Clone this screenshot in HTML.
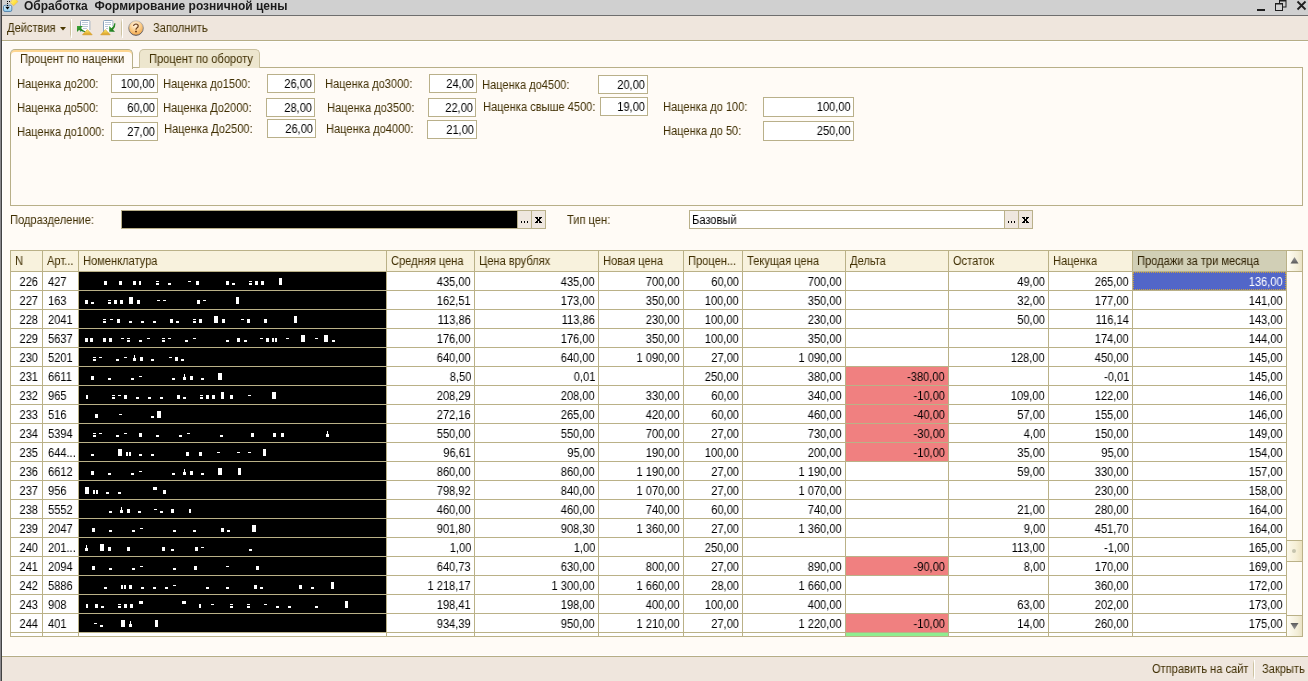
<!DOCTYPE html>
<html><head><meta charset="utf-8"><style>
html,body{margin:0;padding:0;width:1308px;height:681px;overflow:hidden;background:#fffbf6}
body{position:relative;font-family:"Liberation Sans",sans-serif;font-size:11px}
div,svg{position:absolute;box-sizing:content-box}
.t{white-space:nowrap;line-height:13px;will-change:transform}
</style></head><body>
<div style="left:0px;top:0px;width:1308px;height:15px;background:#d0d0d0;"></div>
<div style="left:0px;top:15px;width:1308px;height:1px;background:#6e6e6e;"></div>
<div style="left:0px;top:0px;width:1px;height:681px;background:#8a888c;"></div>
<div style="left:1px;top:0px;width:1px;height:681px;background:#424242;"></div>
<div class="t" style="left:24px;top:0px;color:#1a1a1a;font-size:12px;font-weight:bold;">Обработка&nbsp; Формирование розничной цены</div>
<svg style="left:0px;top:0px" width="20" height="15" viewBox="0 0 20 15">
<defs><linearGradient id="ib" x1="0" y1="0" x2="0" y2="1"><stop offset="0" stop-color="#e6f6ff"/><stop offset="1" stop-color="#8ccbee"/></linearGradient>
<linearGradient id="iy" x1="0" y1="0" x2="1" y2="1"><stop offset="0" stop-color="#fff7a0"/><stop offset="1" stop-color="#ffd200"/></linearGradient></defs>
<rect x="3.5" y="5.3" width="8.3" height="6.2" rx="1.6" fill="url(#ib)" stroke="#4f7fa8" stroke-width="0.9"/>
<rect x="7" y="1" width="1" height="1" fill="#000"/><rect x="7" y="3" width="1" height="1" fill="#000"/><rect x="7" y="5" width="1" height="1" fill="#000"/>
<rect x="9" y="1" width="1" height="1" fill="#000"/><rect x="11" y="1" width="1" height="1" fill="#444"/>
<path d="M5.2 6.8 H9.8 L7.5 9.4 Z" fill="#000"/>
<path d="M14 -2.5 L18 1.6 L13.6 5.8 L10.2 2.4 Z" fill="url(#iy)" stroke="#e6b45a" stroke-width="0.6"/>
</svg>
<svg style="left:1250px;top:0px" width="58" height="15" viewBox="0 0 58 15">
<rect x="7" y="9" width="8" height="2" fill="#1e1e1e"/>
<rect x="29.5" y="0.5" width="6.5" height="6.5" fill="none" stroke="#1e1e1e"/>
<rect x="29" y="0" width="7" height="1.5" fill="#1e1e1e"/>
<rect x="25.5" y="3.5" width="7" height="7" fill="#d3d3d3" stroke="#1e1e1e"/>
<rect x="25" y="3" width="8" height="1.5" fill="#1e1e1e"/>
<path d="M47.5 1.5 L55.5 9.5 M55.5 1.5 L47.5 9.5" stroke="#1e1e1e" stroke-width="1.8"/>
</svg>
<div style="left:2px;top:16px;width:1306px;height:24px;background:#efe6dd;"></div>
<div style="left:2px;top:40px;width:1306px;height:1px;background:#b6ad86;"></div>
<div class="t" style="left:7px;top:22px;color:#3f2e00;font-size:12px;font-weight:normal;transform:scaleX(0.925);transform-origin:left center;">Действия</div>
<svg style="left:60px;top:27px" width="6" height="4"><path d="M0 0 H6 L3 3.5 Z" fill="#4a3700"/></svg>
<div style="left:70px;top:19px;width:1px;height:19px;background:linear-gradient(#efe6dd,#cdc3a0 20%,#cdc3a0 80%,#efe6dd)"></div>
<div style="left:71px;top:19px;width:1px;height:19px;background:#ffffff;"></div>
<div style="left:121px;top:19px;width:1px;height:19px;background:linear-gradient(#efe6dd,#cdc3a0 20%,#cdc3a0 80%,#efe6dd)"></div>
<div style="left:122px;top:19px;width:1px;height:19px;background:#ffffff;"></div>
<svg style="left:74px;top:17px" width="46" height="22" viewBox="0 0 46 22">
<defs>
<linearGradient id="yg" x1="0" y1="0" x2="0" y2="1"><stop offset="0" stop-color="#fff27a"/><stop offset="1" stop-color="#d99a1a"/></linearGradient>
<linearGradient id="gg" x1="0" y1="0" x2="1" y2="1"><stop offset="0" stop-color="#3fa83a"/><stop offset="1" stop-color="#136e13"/></linearGradient>
</defs>
<path d="M6.5 15 V4.5 Q6.5 3.5 7.5 3.5 H14.8 Q15.8 3.5 15.8 4.5 V13" fill="#fff" stroke="#8aa2ba" stroke-width="1"/>
<rect x="7" y="4" width="8.3" height="11" fill="#fff"/>
<path d="M8 5.5 H14 M8 7.5 H14 M9 9.5 H14 M9 11.5 H13" stroke="#b4c2d4" stroke-width="0.9"/>
<path d="M3 9 L9 9 L7 11 Q9 14 11.5 14.5 L10.5 15 Q7 14.5 5 13 L3 15 Z" fill="url(#gg)"/>
<path d="M8.5 17.8 L13.4 12.6 L18.2 17.8 Z" fill="url(#yg)" stroke="#d49a20" stroke-width="0.6"/>
<path d="M29.5 15 V4.5 Q29.5 3.5 30.5 3.5 H37.8 Q38.8 3.5 38.8 4.5 V9" fill="#fff" stroke="#8aa2ba" stroke-width="1"/>
<rect x="30" y="4" width="8.3" height="11" fill="#fff"/>
<path d="M31 5.5 H37 M31 7.5 H37 M31 9.5 H34 M32 11.5 H34" stroke="#b4c2d4" stroke-width="0.9"/>
<path d="M35.2 9 L37.5 11.3 Q40 9 40.5 6 L41.5 6.5 Q41.5 10 39 12.8 L41 14.8 L35.2 14.8 Z" fill="url(#gg)"/>
<path d="M26.7 17.8 L31.4 12.6 L36.2 17.8 Z" fill="url(#yg)" stroke="#d49a20" stroke-width="0.6"/>
</svg>
<svg style="left:127px;top:19px" width="18" height="18" viewBox="0 0 18 18">
<defs><radialGradient id="hg" cx="0.45" cy="0.3" r="0.75"><stop offset="0" stop-color="#fff6e8"/><stop offset="0.55" stop-color="#fbc880"/><stop offset="1" stop-color="#f0a040"/></radialGradient>
<linearGradient id="hb" x1="0" y1="0" x2="0" y2="1"><stop offset="0" stop-color="#c8c4c0"/><stop offset="1" stop-color="#505058"/></linearGradient></defs>
<circle cx="9" cy="9" r="7.3" fill="url(#hg)" stroke="url(#hb)" stroke-width="1"/>
<path d="M6.6 7 Q6.8 5 9 5 Q11.2 5.1 11.2 6.9 Q11.2 8.1 9.9 8.9 Q9 9.5 9 10.7" fill="none" stroke="#6a3d1a" stroke-width="1.2"/>
<rect x="8.1" y="11.8" width="1.8" height="1.5" fill="#6a3d1a"/>
</svg>
<div class="t" style="left:153px;top:22px;color:#3f2e00;font-size:12px;font-weight:normal;transform:scaleX(0.925);transform-origin:left center;">Заполнить</div>
<div style="left:2px;top:41px;width:1306px;height:615px;background:#fffbf6;"></div>
<div style="left:2px;top:41px;width:1306px;height:1px;background:#ffffff;"></div>
<div style="left:2px;top:655px;width:1306px;height:1px;background:#ffffff;"></div>
<div style="left:2px;top:41px;width:1px;height:615px;background:#ffffff;"></div>
<div style="left:2px;top:656px;width:1306px;height:1px;background:#b6ad86;"></div>
<div style="left:2px;top:657px;width:1306px;height:24px;background:#efe6dd;"></div>
<div class="t" style="left:1152px;top:663px;color:#3f2e00;font-size:12px;font-weight:normal;transform:scaleX(0.925);transform-origin:left center;">Отправить на сайт</div>
<div style="left:1253px;top:660px;width:1px;height:19px;background:linear-gradient(#efe6dd,#cdc3a0 20%,#cdc3a0 80%,#efe6dd)"></div>
<div style="left:1254px;top:660px;width:1px;height:19px;background:#ffffff;"></div>
<div class="t" style="left:1262px;top:663px;color:#3f2e00;font-size:12px;font-weight:normal;transform:scaleX(0.925);transform-origin:left center;">Закрыть</div>
<div style="left:10px;top:67px;width:1291px;height:137px;border:1px solid #b8af88;background:#fffbf6;"></div>
<div style="left:139px;top:49px;width:119px;height:18px;border:1px solid #c9c09e;border-bottom:none;border-radius:5px 5px 0 0;background:#ede6ce"></div>
<div class="t" style="left:149px;top:53px;color:#3f2e00;font-size:12px;font-weight:normal;transform:scaleX(0.925);transform-origin:left center;">Процент по обороту</div>
<div style="left:10px;top:49px;width:121px;height:19px;border:1px solid #b8af88;border-bottom:none;border-radius:5px 5px 0 0;background:#fffbf6;box-shadow:inset 0 2px 0 #fed690"></div>
<div class="t" style="left:20px;top:53px;color:#3f2e00;font-size:12px;font-weight:normal;transform:scaleX(0.925);transform-origin:left center;">Процент по наценки</div>
<div class="t" style="left:17px;top:78px;color:#3f2e00;font-size:12px;font-weight:normal;transform:scaleX(0.925);transform-origin:left center;">Наценка до200:</div>
<div style="left:111px;top:74px;width:45px;height:17px;border:1px solid #b9b08a;background:#fff;"></div>
<div class="t" style="right:1153px;top:78px;color:#000000;font-size:12px;font-weight:normal;transform:scaleX(0.925);transform-origin:right center;">100,00</div>
<div class="t" style="left:163px;top:78px;color:#3f2e00;font-size:12px;font-weight:normal;transform:scaleX(0.925);transform-origin:left center;">Наценка до1500:</div>
<div style="left:267px;top:74px;width:46px;height:17px;border:1px solid #b9b08a;background:#fff;"></div>
<div class="t" style="right:996px;top:78px;color:#000000;font-size:12px;font-weight:normal;transform:scaleX(0.925);transform-origin:right center;">26,00</div>
<div class="t" style="left:325px;top:78px;color:#3f2e00;font-size:12px;font-weight:normal;transform:scaleX(0.925);transform-origin:left center;">Наценка до3000:</div>
<div style="left:429px;top:74px;width:46px;height:17px;border:1px solid #b9b08a;background:#fff;"></div>
<div class="t" style="right:834px;top:78px;color:#000000;font-size:12px;font-weight:normal;transform:scaleX(0.925);transform-origin:right center;">24,00</div>
<div class="t" style="left:482px;top:79px;color:#3f2e00;font-size:12px;font-weight:normal;transform:scaleX(0.925);transform-origin:left center;">Наценка до4500:</div>
<div style="left:598px;top:75px;width:48px;height:17px;border:1px solid #b9b08a;background:#fff;"></div>
<div class="t" style="right:663px;top:79px;color:#000000;font-size:12px;font-weight:normal;transform:scaleX(0.925);transform-origin:right center;">20,00</div>
<div class="t" style="left:17px;top:102px;color:#3f2e00;font-size:12px;font-weight:normal;transform:scaleX(0.925);transform-origin:left center;">Наценка до500:</div>
<div style="left:111px;top:98px;width:45px;height:17px;border:1px solid #b9b08a;background:#fff;"></div>
<div class="t" style="right:1153px;top:102px;color:#000000;font-size:12px;font-weight:normal;transform:scaleX(0.925);transform-origin:right center;">60,00</div>
<div class="t" style="left:163px;top:102px;color:#3f2e00;font-size:12px;font-weight:normal;transform:scaleX(0.925);transform-origin:left center;">Наценка До2000:</div>
<div style="left:266px;top:98px;width:47px;height:17px;border:1px solid #b9b08a;background:#fff;"></div>
<div class="t" style="right:996px;top:102px;color:#000000;font-size:12px;font-weight:normal;transform:scaleX(0.925);transform-origin:right center;">28,00</div>
<div class="t" style="left:327px;top:102px;color:#3f2e00;font-size:12px;font-weight:normal;transform:scaleX(0.925);transform-origin:left center;">Наценка до3500:</div>
<div style="left:428px;top:98px;width:46px;height:17px;border:1px solid #b9b08a;background:#fff;"></div>
<div class="t" style="right:835px;top:102px;color:#000000;font-size:12px;font-weight:normal;transform:scaleX(0.925);transform-origin:right center;">22,00</div>
<div class="t" style="left:483px;top:101px;color:#3f2e00;font-size:12px;font-weight:normal;transform:scaleX(0.925);transform-origin:left center;">Наценка свыше 4500:</div>
<div style="left:600px;top:97px;width:46px;height:17px;border:1px solid #b9b08a;background:#fff;"></div>
<div class="t" style="right:663px;top:101px;color:#000000;font-size:12px;font-weight:normal;transform:scaleX(0.925);transform-origin:right center;">19,00</div>
<div class="t" style="left:663px;top:101px;color:#3f2e00;font-size:12px;font-weight:normal;transform:scaleX(0.925);transform-origin:left center;">Наценка до 100:</div>
<div style="left:763px;top:97px;width:89px;height:18px;border:1px solid #b9b08a;background:#fff;"></div>
<div class="t" style="right:457px;top:101px;color:#000000;font-size:12px;font-weight:normal;transform:scaleX(0.925);transform-origin:right center;">100,00</div>
<div class="t" style="left:17px;top:126px;color:#3f2e00;font-size:12px;font-weight:normal;transform:scaleX(0.925);transform-origin:left center;">Наценка до1000:</div>
<div style="left:111px;top:122px;width:45px;height:17px;border:1px solid #b9b08a;background:#fff;"></div>
<div class="t" style="right:1153px;top:126px;color:#000000;font-size:12px;font-weight:normal;transform:scaleX(0.925);transform-origin:right center;">27,00</div>
<div class="t" style="left:164px;top:123px;color:#3f2e00;font-size:12px;font-weight:normal;transform:scaleX(0.925);transform-origin:left center;">Наценка До2500:</div>
<div style="left:267px;top:119px;width:47px;height:17px;border:1px solid #b9b08a;background:#fff;"></div>
<div class="t" style="right:995px;top:123px;color:#000000;font-size:12px;font-weight:normal;transform:scaleX(0.925);transform-origin:right center;">26,00</div>
<div class="t" style="left:326px;top:123px;color:#3f2e00;font-size:12px;font-weight:normal;transform:scaleX(0.925);transform-origin:left center;">Наценка до4000:</div>
<div style="left:427px;top:120px;width:48px;height:17px;border:1px solid #b9b08a;background:#fff;"></div>
<div class="t" style="right:834px;top:124px;color:#000000;font-size:12px;font-weight:normal;transform:scaleX(0.925);transform-origin:right center;">21,00</div>
<div class="t" style="left:663px;top:125px;color:#3f2e00;font-size:12px;font-weight:normal;transform:scaleX(0.925);transform-origin:left center;">Наценка до 50:</div>
<div style="left:763px;top:121px;width:89px;height:18px;border:1px solid #b9b08a;background:#fff;"></div>
<div class="t" style="right:457px;top:125px;color:#000000;font-size:12px;font-weight:normal;transform:scaleX(0.925);transform-origin:right center;">250,00</div>
<div class="t" style="left:10px;top:214px;color:#3f2e00;font-size:12px;font-weight:normal;transform:scaleX(0.925);transform-origin:left center;">Подразделение:</div>
<div style="left:121px;top:210px;width:423px;height:17px;border:1px solid #b9b08a;background:#fff;"></div>
<div style="left:517px;top:211px;width:1px;height:17px;background:#b9b08a;"></div>
<div style="left:518px;top:211px;width:13px;height:17px;background:#efe7df;"></div>
<div style="left:531px;top:211px;width:1px;height:17px;background:#b9b08a;"></div>
<div style="left:532px;top:211px;width:13px;height:17px;background:#efe7df;"></div>
<div style="left:521px;top:221px;width:1px;height:2px;background:#000;"></div>
<div style="left:524px;top:221px;width:1px;height:2px;background:#000;"></div>
<div style="left:527px;top:221px;width:1px;height:2px;background:#000;"></div>
<div style="left:535px;top:217px;width:3px;height:1px;background:#000;"></div>
<div style="left:539px;top:217px;width:3px;height:1px;background:#000;"></div>
<div style="left:536px;top:218px;width:2px;height:1px;background:#000;"></div>
<div style="left:539px;top:218px;width:2px;height:1px;background:#000;"></div>
<div style="left:537px;top:219px;width:3px;height:1px;background:#000;"></div>
<div style="left:537px;top:220px;width:3px;height:1px;background:#000;"></div>
<div style="left:536px;top:221px;width:2px;height:1px;background:#000;"></div>
<div style="left:539px;top:221px;width:2px;height:1px;background:#000;"></div>
<div style="left:535px;top:222px;width:3px;height:1px;background:#000;"></div>
<div style="left:539px;top:222px;width:3px;height:1px;background:#000;"></div>
<div style="left:122px;top:211px;width:395px;height:17px;background:#000;"></div>
<div class="t" style="left:567px;top:214px;color:#3f2e00;font-size:12px;font-weight:normal;transform:scaleX(0.925);transform-origin:left center;">Тип цен:</div>
<div style="left:689px;top:210px;width:342px;height:17px;border:1px solid #b9b08a;background:#fff;"></div>
<div style="left:1004px;top:211px;width:1px;height:17px;background:#b9b08a;"></div>
<div style="left:1005px;top:211px;width:13px;height:17px;background:#efe7df;"></div>
<div style="left:1018px;top:211px;width:1px;height:17px;background:#b9b08a;"></div>
<div style="left:1019px;top:211px;width:13px;height:17px;background:#efe7df;"></div>
<div style="left:1008px;top:221px;width:1px;height:2px;background:#000;"></div>
<div style="left:1011px;top:221px;width:1px;height:2px;background:#000;"></div>
<div style="left:1014px;top:221px;width:1px;height:2px;background:#000;"></div>
<div style="left:1022px;top:217px;width:3px;height:1px;background:#000;"></div>
<div style="left:1026px;top:217px;width:3px;height:1px;background:#000;"></div>
<div style="left:1023px;top:218px;width:2px;height:1px;background:#000;"></div>
<div style="left:1026px;top:218px;width:2px;height:1px;background:#000;"></div>
<div style="left:1024px;top:219px;width:3px;height:1px;background:#000;"></div>
<div style="left:1024px;top:220px;width:3px;height:1px;background:#000;"></div>
<div style="left:1023px;top:221px;width:2px;height:1px;background:#000;"></div>
<div style="left:1026px;top:221px;width:2px;height:1px;background:#000;"></div>
<div style="left:1022px;top:222px;width:3px;height:1px;background:#000;"></div>
<div style="left:1026px;top:222px;width:3px;height:1px;background:#000;"></div>
<div class="t" style="left:692px;top:214px;color:#000;font-size:12px;font-weight:normal;transform:scaleX(0.925);transform-origin:left center;">Базовый</div>
<div style="left:10px;top:250px;width:1293px;height:387px;background:#bab187;"></div>
<div style="left:11px;top:251px;width:1291px;height:385px;background:#ffffff;"></div>
<div style="left:11px;top:251px;width:1275px;height:20px;background:#f8f2dd;"></div>
<div style="left:1133px;top:251px;width:153px;height:20px;background:#d1cfb6;"></div>
<div style="left:11px;top:271px;width:1275px;height:1px;background:#bab187;"></div>
<div class="t" style="left:15px;top:255px;color:#3f2e00;font-size:12px;font-weight:normal;transform:scaleX(0.925);transform-origin:left center;">N</div>
<div class="t" style="left:47px;top:255px;color:#3f2e00;font-size:12px;font-weight:normal;transform:scaleX(0.925);transform-origin:left center;">Арт...</div>
<div class="t" style="left:83px;top:255px;color:#3f2e00;font-size:12px;font-weight:normal;transform:scaleX(0.925);transform-origin:left center;">Номенклатура</div>
<div class="t" style="left:391px;top:255px;color:#3f2e00;font-size:12px;font-weight:normal;transform:scaleX(0.925);transform-origin:left center;">Средняя цена</div>
<div class="t" style="left:479px;top:255px;color:#3f2e00;font-size:12px;font-weight:normal;transform:scaleX(0.925);transform-origin:left center;">Цена врублях</div>
<div class="t" style="left:603px;top:255px;color:#3f2e00;font-size:12px;font-weight:normal;transform:scaleX(0.925);transform-origin:left center;">Новая цена</div>
<div class="t" style="left:688px;top:255px;color:#3f2e00;font-size:12px;font-weight:normal;transform:scaleX(0.925);transform-origin:left center;">Процен...</div>
<div class="t" style="left:747px;top:255px;color:#3f2e00;font-size:12px;font-weight:normal;transform:scaleX(0.925);transform-origin:left center;">Текущая цена</div>
<div class="t" style="left:850px;top:255px;color:#3f2e00;font-size:12px;font-weight:normal;transform:scaleX(0.925);transform-origin:left center;">Дельта</div>
<div class="t" style="left:953px;top:255px;color:#3f2e00;font-size:12px;font-weight:normal;transform:scaleX(0.925);transform-origin:left center;">Остаток</div>
<div class="t" style="left:1053px;top:255px;color:#3f2e00;font-size:12px;font-weight:normal;transform:scaleX(0.925);transform-origin:left center;">Наценка</div>
<div class="t" style="left:1137px;top:255px;color:#2e2000;font-size:12px;font-weight:normal;transform:scaleX(0.925);transform-origin:left center;">Продажи за три месяца</div>
<div style="left:1287px;top:251px;width:15px;height:385px;background:#fffcf6;"></div>
<div style="left:1286px;top:251px;width:1px;height:385px;background:#bab187;"></div>
<div style="left:1287px;top:251px;width:15px;height:20px;background:linear-gradient(90deg,#fffdf4,#f3eed8 70%,#ebe3c6)"></div>
<div style="left:1287px;top:271px;width:15px;height:1px;background:#bab187;"></div>
<svg style="left:1290px;top:257px" width="9" height="7"><defs><linearGradient id="ag" x1="0" y1="0" x2="0" y2="1"><stop offset="0" stop-color="#9a9a9a"/><stop offset="1" stop-color="#5a5a5a"/></linearGradient></defs><path d="M4.5 0 L8.5 6.5 H0.5 Z" fill="url(#ag)"/></svg>
<div style="left:1287px;top:616px;width:15px;height:20px;background:linear-gradient(90deg,#fffdf4,#f3eed8 70%,#ebe3c6)"></div>
<div style="left:1287px;top:615px;width:15px;height:1px;background:#bab187;"></div>
<svg style="left:1290px;top:623px" width="9" height="7"><defs><linearGradient id="ag2" x1="0" y1="0" x2="0" y2="1"><stop offset="0" stop-color="#5a5a5a"/><stop offset="1" stop-color="#9a9a9a"/></linearGradient></defs><path d="M0.5 0 H8.5 L4.5 6.5 Z" fill="url(#ag2)"/></svg>
<div style="left:1287px;top:540px;width:15px;height:22px;background:linear-gradient(90deg,#fbf8ea,#f6efd6 60%,#ece2c0);border-top:1px solid #bab187;border-bottom:1px solid #bab187;box-sizing:border-box"></div>
<div style="left:1292px;top:549px;width:4px;height:4px;border-radius:2px;background:#c6c4ae"></div>
<div style="left:11px;top:290px;width:1275px;height:1px;background:#bab187;"></div>
<div style="left:79px;top:272px;width:307px;height:18px;background:#000;"></div>
<div style="left:1133px;top:272px;width:153px;height:18px;background:#5266c8;outline:1px dotted #c8a040;outline-offset:-1px"></div>
<div class="t" style="right:1270px;top:276px;color:#000;font-size:12px;font-weight:normal;transform:scaleX(0.925);transform-origin:right center;">226</div>
<div class="t" style="left:48px;top:276px;color:#000;font-size:12px;font-weight:normal;transform:scaleX(0.925);transform-origin:left center;">427</div>
<div class="t" style="right:837px;top:276px;color:#000;font-size:12px;font-weight:normal;transform:scaleX(0.925);transform-origin:right center;">435,00</div>
<div class="t" style="right:713px;top:276px;color:#000;font-size:12px;font-weight:normal;transform:scaleX(0.925);transform-origin:right center;">435,00</div>
<div class="t" style="right:628px;top:276px;color:#000;font-size:12px;font-weight:normal;transform:scaleX(0.925);transform-origin:right center;">700,00</div>
<div class="t" style="right:569px;top:276px;color:#000;font-size:12px;font-weight:normal;transform:scaleX(0.925);transform-origin:right center;">60,00</div>
<div class="t" style="right:466px;top:276px;color:#000;font-size:12px;font-weight:normal;transform:scaleX(0.925);transform-origin:right center;">700,00</div>
<div class="t" style="right:263px;top:276px;color:#000;font-size:12px;font-weight:normal;transform:scaleX(0.925);transform-origin:right center;">49,00</div>
<div class="t" style="right:179px;top:276px;color:#000;font-size:12px;font-weight:normal;transform:scaleX(0.925);transform-origin:right center;">265,00</div>
<div class="t" style="right:25px;top:276px;color:#fff;font-size:12px;font-weight:normal;transform:scaleX(0.925);transform-origin:right center;">136,00</div>
<div style="left:104px;top:281px;width:3px;height:4px;background:#fff;"></div>
<div style="left:119px;top:281px;width:3px;height:4px;background:#fff;"></div>
<div style="left:133px;top:281px;width:3px;height:4px;background:#fff;"></div>
<div style="left:139px;top:281px;width:2px;height:4px;background:#fff;"></div>
<div style="left:156px;top:281px;width:3px;height:1px;background:#fff;"></div>
<div style="left:156px;top:283px;width:3px;height:2px;background:#fff;"></div>
<div style="left:168px;top:283px;width:3px;height:2px;background:#fff;"></div>
<div style="left:188px;top:281px;width:3px;height:1px;background:#fff;"></div>
<div style="left:196px;top:281px;width:3px;height:4px;background:#fff;"></div>
<div style="left:226px;top:281px;width:3px;height:4px;background:#fff;"></div>
<div style="left:232px;top:283px;width:3px;height:2px;background:#fff;"></div>
<div style="left:249px;top:281px;width:3px;height:1px;background:#fff;"></div>
<div style="left:249px;top:283px;width:3px;height:2px;background:#fff;"></div>
<div style="left:255px;top:281px;width:3px;height:4px;background:#fff;"></div>
<div style="left:261px;top:281px;width:3px;height:4px;background:#fff;"></div>
<div style="left:279px;top:278px;width:3px;height:7px;background:#fff;"></div>
<div style="left:11px;top:309px;width:1275px;height:1px;background:#bab187;"></div>
<div style="left:79px;top:291px;width:307px;height:18px;background:#000;"></div>
<div class="t" style="right:1270px;top:295px;color:#000;font-size:12px;font-weight:normal;transform:scaleX(0.925);transform-origin:right center;">227</div>
<div class="t" style="left:48px;top:295px;color:#000;font-size:12px;font-weight:normal;transform:scaleX(0.925);transform-origin:left center;">163</div>
<div class="t" style="right:837px;top:295px;color:#000;font-size:12px;font-weight:normal;transform:scaleX(0.925);transform-origin:right center;">162,51</div>
<div class="t" style="right:713px;top:295px;color:#000;font-size:12px;font-weight:normal;transform:scaleX(0.925);transform-origin:right center;">173,00</div>
<div class="t" style="right:628px;top:295px;color:#000;font-size:12px;font-weight:normal;transform:scaleX(0.925);transform-origin:right center;">350,00</div>
<div class="t" style="right:569px;top:295px;color:#000;font-size:12px;font-weight:normal;transform:scaleX(0.925);transform-origin:right center;">100,00</div>
<div class="t" style="right:466px;top:295px;color:#000;font-size:12px;font-weight:normal;transform:scaleX(0.925);transform-origin:right center;">350,00</div>
<div class="t" style="right:263px;top:295px;color:#000;font-size:12px;font-weight:normal;transform:scaleX(0.925);transform-origin:right center;">32,00</div>
<div class="t" style="right:179px;top:295px;color:#000;font-size:12px;font-weight:normal;transform:scaleX(0.925);transform-origin:right center;">177,00</div>
<div class="t" style="right:25px;top:295px;color:#000;font-size:12px;font-weight:normal;transform:scaleX(0.925);transform-origin:right center;">141,00</div>
<div style="left:85px;top:300px;width:3px;height:4px;background:#fff;"></div>
<div style="left:91px;top:302px;width:3px;height:2px;background:#fff;"></div>
<div style="left:108px;top:300px;width:3px;height:1px;background:#fff;"></div>
<div style="left:108px;top:302px;width:3px;height:2px;background:#fff;"></div>
<div style="left:114px;top:300px;width:3px;height:4px;background:#fff;"></div>
<div style="left:120px;top:300px;width:3px;height:4px;background:#fff;"></div>
<div style="left:129px;top:297px;width:4px;height:7px;background:#fff;"></div>
<div style="left:137px;top:300px;width:3px;height:4px;background:#fff;"></div>
<div style="left:157px;top:300px;width:3px;height:1px;background:#fff;"></div>
<div style="left:163px;top:300px;width:3px;height:1px;background:#fff;"></div>
<div style="left:197px;top:300px;width:3px;height:4px;background:#fff;"></div>
<div style="left:203px;top:300px;width:3px;height:1px;background:#fff;"></div>
<div style="left:236px;top:297px;width:3px;height:7px;background:#fff;"></div>
<div style="left:11px;top:328px;width:1275px;height:1px;background:#bab187;"></div>
<div style="left:79px;top:310px;width:307px;height:18px;background:#000;"></div>
<div class="t" style="right:1270px;top:314px;color:#000;font-size:12px;font-weight:normal;transform:scaleX(0.925);transform-origin:right center;">228</div>
<div class="t" style="left:48px;top:314px;color:#000;font-size:12px;font-weight:normal;transform:scaleX(0.925);transform-origin:left center;">2041</div>
<div class="t" style="right:837px;top:314px;color:#000;font-size:12px;font-weight:normal;transform:scaleX(0.925);transform-origin:right center;">113,86</div>
<div class="t" style="right:713px;top:314px;color:#000;font-size:12px;font-weight:normal;transform:scaleX(0.925);transform-origin:right center;">113,86</div>
<div class="t" style="right:628px;top:314px;color:#000;font-size:12px;font-weight:normal;transform:scaleX(0.925);transform-origin:right center;">230,00</div>
<div class="t" style="right:569px;top:314px;color:#000;font-size:12px;font-weight:normal;transform:scaleX(0.925);transform-origin:right center;">100,00</div>
<div class="t" style="right:466px;top:314px;color:#000;font-size:12px;font-weight:normal;transform:scaleX(0.925);transform-origin:right center;">230,00</div>
<div class="t" style="right:263px;top:314px;color:#000;font-size:12px;font-weight:normal;transform:scaleX(0.925);transform-origin:right center;">50,00</div>
<div class="t" style="right:179px;top:314px;color:#000;font-size:12px;font-weight:normal;transform:scaleX(0.925);transform-origin:right center;">116,14</div>
<div class="t" style="right:25px;top:314px;color:#000;font-size:12px;font-weight:normal;transform:scaleX(0.925);transform-origin:right center;">143,00</div>
<div style="left:103px;top:319px;width:3px;height:1px;background:#fff;"></div>
<div style="left:103px;top:321px;width:3px;height:2px;background:#fff;"></div>
<div style="left:110px;top:319px;width:3px;height:1px;background:#fff;"></div>
<div style="left:117px;top:319px;width:3px;height:4px;background:#fff;"></div>
<div style="left:129px;top:321px;width:3px;height:2px;background:#fff;"></div>
<div style="left:141px;top:321px;width:3px;height:2px;background:#fff;"></div>
<div style="left:153px;top:321px;width:3px;height:2px;background:#fff;"></div>
<div style="left:170px;top:319px;width:3px;height:4px;background:#fff;"></div>
<div style="left:176px;top:321px;width:3px;height:2px;background:#fff;"></div>
<div style="left:193px;top:319px;width:3px;height:1px;background:#fff;"></div>
<div style="left:193px;top:321px;width:3px;height:2px;background:#fff;"></div>
<div style="left:199px;top:319px;width:3px;height:4px;background:#fff;"></div>
<div style="left:214px;top:316px;width:4px;height:7px;background:#fff;"></div>
<div style="left:222px;top:319px;width:3px;height:4px;background:#fff;"></div>
<div style="left:241px;top:319px;width:3px;height:1px;background:#fff;"></div>
<div style="left:247px;top:319px;width:3px;height:4px;background:#fff;"></div>
<div style="left:264px;top:319px;width:3px;height:4px;background:#fff;"></div>
<div style="left:294px;top:316px;width:3px;height:7px;background:#fff;"></div>
<div style="left:11px;top:347px;width:1275px;height:1px;background:#bab187;"></div>
<div style="left:79px;top:329px;width:307px;height:18px;background:#000;"></div>
<div class="t" style="right:1270px;top:333px;color:#000;font-size:12px;font-weight:normal;transform:scaleX(0.925);transform-origin:right center;">229</div>
<div class="t" style="left:48px;top:333px;color:#000;font-size:12px;font-weight:normal;transform:scaleX(0.925);transform-origin:left center;">5637</div>
<div class="t" style="right:837px;top:333px;color:#000;font-size:12px;font-weight:normal;transform:scaleX(0.925);transform-origin:right center;">176,00</div>
<div class="t" style="right:713px;top:333px;color:#000;font-size:12px;font-weight:normal;transform:scaleX(0.925);transform-origin:right center;">176,00</div>
<div class="t" style="right:628px;top:333px;color:#000;font-size:12px;font-weight:normal;transform:scaleX(0.925);transform-origin:right center;">350,00</div>
<div class="t" style="right:569px;top:333px;color:#000;font-size:12px;font-weight:normal;transform:scaleX(0.925);transform-origin:right center;">100,00</div>
<div class="t" style="right:466px;top:333px;color:#000;font-size:12px;font-weight:normal;transform:scaleX(0.925);transform-origin:right center;">350,00</div>
<div class="t" style="right:179px;top:333px;color:#000;font-size:12px;font-weight:normal;transform:scaleX(0.925);transform-origin:right center;">174,00</div>
<div class="t" style="right:25px;top:333px;color:#000;font-size:12px;font-weight:normal;transform:scaleX(0.925);transform-origin:right center;">144,00</div>
<div style="left:85px;top:338px;width:3px;height:4px;background:#fff;"></div>
<div style="left:90px;top:338px;width:3px;height:4px;background:#fff;"></div>
<div style="left:103px;top:338px;width:3px;height:4px;background:#fff;"></div>
<div style="left:109px;top:338px;width:3px;height:4px;background:#fff;"></div>
<div style="left:121px;top:338px;width:3px;height:1px;background:#fff;"></div>
<div style="left:127px;top:338px;width:3px;height:1px;background:#fff;"></div>
<div style="left:127px;top:340px;width:3px;height:2px;background:#fff;"></div>
<div style="left:139px;top:340px;width:3px;height:2px;background:#fff;"></div>
<div style="left:147px;top:338px;width:3px;height:1px;background:#fff;"></div>
<div style="left:162px;top:338px;width:3px;height:1px;background:#fff;"></div>
<div style="left:162px;top:340px;width:3px;height:2px;background:#fff;"></div>
<div style="left:168px;top:338px;width:3px;height:1px;background:#fff;"></div>
<div style="left:185px;top:340px;width:3px;height:2px;background:#fff;"></div>
<div style="left:193px;top:338px;width:3px;height:1px;background:#fff;"></div>
<div style="left:226px;top:340px;width:3px;height:2px;background:#fff;"></div>
<div style="left:237px;top:338px;width:3px;height:4px;background:#fff;"></div>
<div style="left:244px;top:340px;width:3px;height:2px;background:#fff;"></div>
<div style="left:260px;top:338px;width:3px;height:1px;background:#fff;"></div>
<div style="left:266px;top:338px;width:3px;height:4px;background:#fff;"></div>
<div style="left:272px;top:338px;width:2px;height:4px;background:#fff;"></div>
<div style="left:275px;top:338px;width:2px;height:4px;background:#fff;"></div>
<div style="left:286px;top:338px;width:3px;height:1px;background:#fff;"></div>
<div style="left:301px;top:335px;width:4px;height:7px;background:#fff;"></div>
<div style="left:315px;top:338px;width:3px;height:1px;background:#fff;"></div>
<div style="left:324px;top:335px;width:4px;height:7px;background:#fff;"></div>
<div style="left:332px;top:340px;width:3px;height:2px;background:#fff;"></div>
<div style="left:11px;top:366px;width:1275px;height:1px;background:#bab187;"></div>
<div style="left:79px;top:348px;width:307px;height:18px;background:#000;"></div>
<div class="t" style="right:1270px;top:352px;color:#000;font-size:12px;font-weight:normal;transform:scaleX(0.925);transform-origin:right center;">230</div>
<div class="t" style="left:48px;top:352px;color:#000;font-size:12px;font-weight:normal;transform:scaleX(0.925);transform-origin:left center;">5201</div>
<div class="t" style="right:837px;top:352px;color:#000;font-size:12px;font-weight:normal;transform:scaleX(0.925);transform-origin:right center;">640,00</div>
<div class="t" style="right:713px;top:352px;color:#000;font-size:12px;font-weight:normal;transform:scaleX(0.925);transform-origin:right center;">640,00</div>
<div class="t" style="right:628px;top:352px;color:#000;font-size:12px;font-weight:normal;transform:scaleX(0.925);transform-origin:right center;">1 090,00</div>
<div class="t" style="right:569px;top:352px;color:#000;font-size:12px;font-weight:normal;transform:scaleX(0.925);transform-origin:right center;">27,00</div>
<div class="t" style="right:466px;top:352px;color:#000;font-size:12px;font-weight:normal;transform:scaleX(0.925);transform-origin:right center;">1 090,00</div>
<div class="t" style="right:263px;top:352px;color:#000;font-size:12px;font-weight:normal;transform:scaleX(0.925);transform-origin:right center;">128,00</div>
<div class="t" style="right:179px;top:352px;color:#000;font-size:12px;font-weight:normal;transform:scaleX(0.925);transform-origin:right center;">450,00</div>
<div class="t" style="right:25px;top:352px;color:#000;font-size:12px;font-weight:normal;transform:scaleX(0.925);transform-origin:right center;">145,00</div>
<div style="left:93px;top:357px;width:3px;height:1px;background:#fff;"></div>
<div style="left:93px;top:359px;width:3px;height:2px;background:#fff;"></div>
<div style="left:99px;top:357px;width:3px;height:1px;background:#fff;"></div>
<div style="left:116px;top:359px;width:3px;height:2px;background:#fff;"></div>
<div style="left:124px;top:357px;width:3px;height:1px;background:#fff;"></div>
<div style="left:134px;top:355px;width:1px;height:3px;background:#fff;"></div>
<div style="left:133px;top:358px;width:3px;height:3px;background:#fff;"></div>
<div style="left:140px;top:357px;width:3px;height:4px;background:#fff;"></div>
<div style="left:151px;top:359px;width:3px;height:2px;background:#fff;"></div>
<div style="left:169px;top:357px;width:3px;height:1px;background:#fff;"></div>
<div style="left:175px;top:357px;width:3px;height:4px;background:#fff;"></div>
<div style="left:181px;top:359px;width:3px;height:2px;background:#fff;"></div>
<div style="left:11px;top:385px;width:1275px;height:1px;background:#bab187;"></div>
<div style="left:79px;top:367px;width:307px;height:18px;background:#000;"></div>
<div style="left:846px;top:367px;width:102px;height:18px;background:#f08080;"></div>
<div class="t" style="right:1270px;top:371px;color:#000;font-size:12px;font-weight:normal;transform:scaleX(0.925);transform-origin:right center;">231</div>
<div class="t" style="left:48px;top:371px;color:#000;font-size:12px;font-weight:normal;transform:scaleX(0.925);transform-origin:left center;">6611</div>
<div class="t" style="right:837px;top:371px;color:#000;font-size:12px;font-weight:normal;transform:scaleX(0.925);transform-origin:right center;">8,50</div>
<div class="t" style="right:713px;top:371px;color:#000;font-size:12px;font-weight:normal;transform:scaleX(0.925);transform-origin:right center;">0,01</div>
<div class="t" style="right:569px;top:371px;color:#000;font-size:12px;font-weight:normal;transform:scaleX(0.925);transform-origin:right center;">250,00</div>
<div class="t" style="right:466px;top:371px;color:#000;font-size:12px;font-weight:normal;transform:scaleX(0.925);transform-origin:right center;">380,00</div>
<div class="t" style="right:363px;top:371px;color:#000;font-size:12px;font-weight:normal;transform:scaleX(0.925);transform-origin:right center;">-380,00</div>
<div class="t" style="right:179px;top:371px;color:#000;font-size:12px;font-weight:normal;transform:scaleX(0.925);transform-origin:right center;">-0,01</div>
<div class="t" style="right:25px;top:371px;color:#000;font-size:12px;font-weight:normal;transform:scaleX(0.925);transform-origin:right center;">145,00</div>
<div style="left:91px;top:376px;width:3px;height:4px;background:#fff;"></div>
<div style="left:108px;top:378px;width:3px;height:2px;background:#fff;"></div>
<div style="left:131px;top:378px;width:3px;height:2px;background:#fff;"></div>
<div style="left:139px;top:376px;width:3px;height:1px;background:#fff;"></div>
<div style="left:172px;top:378px;width:3px;height:2px;background:#fff;"></div>
<div style="left:184px;top:374px;width:1px;height:3px;background:#fff;"></div>
<div style="left:183px;top:377px;width:3px;height:3px;background:#fff;"></div>
<div style="left:190px;top:376px;width:3px;height:4px;background:#fff;"></div>
<div style="left:201px;top:378px;width:3px;height:2px;background:#fff;"></div>
<div style="left:218px;top:373px;width:4px;height:7px;background:#fff;"></div>
<div style="left:11px;top:404px;width:1275px;height:1px;background:#bab187;"></div>
<div style="left:79px;top:386px;width:307px;height:18px;background:#000;"></div>
<div style="left:846px;top:386px;width:102px;height:18px;background:#f08080;"></div>
<div class="t" style="right:1270px;top:390px;color:#000;font-size:12px;font-weight:normal;transform:scaleX(0.925);transform-origin:right center;">232</div>
<div class="t" style="left:48px;top:390px;color:#000;font-size:12px;font-weight:normal;transform:scaleX(0.925);transform-origin:left center;">965</div>
<div class="t" style="right:837px;top:390px;color:#000;font-size:12px;font-weight:normal;transform:scaleX(0.925);transform-origin:right center;">208,29</div>
<div class="t" style="right:713px;top:390px;color:#000;font-size:12px;font-weight:normal;transform:scaleX(0.925);transform-origin:right center;">208,00</div>
<div class="t" style="right:628px;top:390px;color:#000;font-size:12px;font-weight:normal;transform:scaleX(0.925);transform-origin:right center;">330,00</div>
<div class="t" style="right:569px;top:390px;color:#000;font-size:12px;font-weight:normal;transform:scaleX(0.925);transform-origin:right center;">60,00</div>
<div class="t" style="right:466px;top:390px;color:#000;font-size:12px;font-weight:normal;transform:scaleX(0.925);transform-origin:right center;">340,00</div>
<div class="t" style="right:363px;top:390px;color:#000;font-size:12px;font-weight:normal;transform:scaleX(0.925);transform-origin:right center;">-10,00</div>
<div class="t" style="right:263px;top:390px;color:#000;font-size:12px;font-weight:normal;transform:scaleX(0.925);transform-origin:right center;">109,00</div>
<div class="t" style="right:179px;top:390px;color:#000;font-size:12px;font-weight:normal;transform:scaleX(0.925);transform-origin:right center;">122,00</div>
<div class="t" style="right:25px;top:390px;color:#000;font-size:12px;font-weight:normal;transform:scaleX(0.925);transform-origin:right center;">146,00</div>
<div style="left:86px;top:395px;width:2px;height:4px;background:#fff;"></div>
<div style="left:112px;top:395px;width:3px;height:1px;background:#fff;"></div>
<div style="left:112px;top:397px;width:3px;height:2px;background:#fff;"></div>
<div style="left:118px;top:395px;width:3px;height:1px;background:#fff;"></div>
<div style="left:124px;top:395px;width:3px;height:4px;background:#fff;"></div>
<div style="left:136px;top:397px;width:3px;height:2px;background:#fff;"></div>
<div style="left:148px;top:397px;width:3px;height:2px;background:#fff;"></div>
<div style="left:160px;top:397px;width:3px;height:2px;background:#fff;"></div>
<div style="left:177px;top:395px;width:3px;height:4px;background:#fff;"></div>
<div style="left:183px;top:397px;width:3px;height:2px;background:#fff;"></div>
<div style="left:200px;top:395px;width:3px;height:1px;background:#fff;"></div>
<div style="left:200px;top:397px;width:3px;height:2px;background:#fff;"></div>
<div style="left:206px;top:395px;width:3px;height:4px;background:#fff;"></div>
<div style="left:212px;top:395px;width:3px;height:4px;background:#fff;"></div>
<div style="left:221px;top:392px;width:3px;height:7px;background:#fff;"></div>
<div style="left:230px;top:395px;width:3px;height:4px;background:#fff;"></div>
<div style="left:248px;top:395px;width:3px;height:1px;background:#fff;"></div>
<div style="left:272px;top:392px;width:4px;height:7px;background:#fff;"></div>
<div style="left:11px;top:423px;width:1275px;height:1px;background:#bab187;"></div>
<div style="left:79px;top:405px;width:307px;height:18px;background:#000;"></div>
<div style="left:846px;top:405px;width:102px;height:18px;background:#f08080;"></div>
<div class="t" style="right:1270px;top:409px;color:#000;font-size:12px;font-weight:normal;transform:scaleX(0.925);transform-origin:right center;">233</div>
<div class="t" style="left:48px;top:409px;color:#000;font-size:12px;font-weight:normal;transform:scaleX(0.925);transform-origin:left center;">516</div>
<div class="t" style="right:837px;top:409px;color:#000;font-size:12px;font-weight:normal;transform:scaleX(0.925);transform-origin:right center;">272,16</div>
<div class="t" style="right:713px;top:409px;color:#000;font-size:12px;font-weight:normal;transform:scaleX(0.925);transform-origin:right center;">265,00</div>
<div class="t" style="right:628px;top:409px;color:#000;font-size:12px;font-weight:normal;transform:scaleX(0.925);transform-origin:right center;">420,00</div>
<div class="t" style="right:569px;top:409px;color:#000;font-size:12px;font-weight:normal;transform:scaleX(0.925);transform-origin:right center;">60,00</div>
<div class="t" style="right:466px;top:409px;color:#000;font-size:12px;font-weight:normal;transform:scaleX(0.925);transform-origin:right center;">460,00</div>
<div class="t" style="right:363px;top:409px;color:#000;font-size:12px;font-weight:normal;transform:scaleX(0.925);transform-origin:right center;">-40,00</div>
<div class="t" style="right:263px;top:409px;color:#000;font-size:12px;font-weight:normal;transform:scaleX(0.925);transform-origin:right center;">57,00</div>
<div class="t" style="right:179px;top:409px;color:#000;font-size:12px;font-weight:normal;transform:scaleX(0.925);transform-origin:right center;">155,00</div>
<div class="t" style="right:25px;top:409px;color:#000;font-size:12px;font-weight:normal;transform:scaleX(0.925);transform-origin:right center;">146,00</div>
<div style="left:95px;top:414px;width:3px;height:4px;background:#fff;"></div>
<div style="left:119px;top:414px;width:3px;height:1px;background:#fff;"></div>
<div style="left:151px;top:416px;width:3px;height:2px;background:#fff;"></div>
<div style="left:157px;top:411px;width:4px;height:7px;background:#fff;"></div>
<div style="left:11px;top:442px;width:1275px;height:1px;background:#bab187;"></div>
<div style="left:79px;top:424px;width:307px;height:18px;background:#000;"></div>
<div style="left:846px;top:424px;width:102px;height:18px;background:#f08080;"></div>
<div class="t" style="right:1270px;top:428px;color:#000;font-size:12px;font-weight:normal;transform:scaleX(0.925);transform-origin:right center;">234</div>
<div class="t" style="left:48px;top:428px;color:#000;font-size:12px;font-weight:normal;transform:scaleX(0.925);transform-origin:left center;">5394</div>
<div class="t" style="right:837px;top:428px;color:#000;font-size:12px;font-weight:normal;transform:scaleX(0.925);transform-origin:right center;">550,00</div>
<div class="t" style="right:713px;top:428px;color:#000;font-size:12px;font-weight:normal;transform:scaleX(0.925);transform-origin:right center;">550,00</div>
<div class="t" style="right:628px;top:428px;color:#000;font-size:12px;font-weight:normal;transform:scaleX(0.925);transform-origin:right center;">700,00</div>
<div class="t" style="right:569px;top:428px;color:#000;font-size:12px;font-weight:normal;transform:scaleX(0.925);transform-origin:right center;">27,00</div>
<div class="t" style="right:466px;top:428px;color:#000;font-size:12px;font-weight:normal;transform:scaleX(0.925);transform-origin:right center;">730,00</div>
<div class="t" style="right:363px;top:428px;color:#000;font-size:12px;font-weight:normal;transform:scaleX(0.925);transform-origin:right center;">-30,00</div>
<div class="t" style="right:263px;top:428px;color:#000;font-size:12px;font-weight:normal;transform:scaleX(0.925);transform-origin:right center;">4,00</div>
<div class="t" style="right:179px;top:428px;color:#000;font-size:12px;font-weight:normal;transform:scaleX(0.925);transform-origin:right center;">150,00</div>
<div class="t" style="right:25px;top:428px;color:#000;font-size:12px;font-weight:normal;transform:scaleX(0.925);transform-origin:right center;">149,00</div>
<div style="left:93px;top:433px;width:3px;height:1px;background:#fff;"></div>
<div style="left:93px;top:435px;width:3px;height:2px;background:#fff;"></div>
<div style="left:99px;top:433px;width:3px;height:1px;background:#fff;"></div>
<div style="left:116px;top:435px;width:3px;height:2px;background:#fff;"></div>
<div style="left:124px;top:433px;width:3px;height:1px;background:#fff;"></div>
<div style="left:139px;top:433px;width:3px;height:4px;background:#fff;"></div>
<div style="left:156px;top:435px;width:3px;height:2px;background:#fff;"></div>
<div style="left:179px;top:435px;width:3px;height:2px;background:#fff;"></div>
<div style="left:187px;top:433px;width:3px;height:1px;background:#fff;"></div>
<div style="left:220px;top:435px;width:3px;height:2px;background:#fff;"></div>
<div style="left:251px;top:433px;width:3px;height:4px;background:#fff;"></div>
<div style="left:273px;top:433px;width:3px;height:4px;background:#fff;"></div>
<div style="left:281px;top:433px;width:3px;height:4px;background:#fff;"></div>
<div style="left:327px;top:431px;width:1px;height:3px;background:#fff;"></div>
<div style="left:326px;top:434px;width:3px;height:3px;background:#fff;"></div>
<div style="left:11px;top:461px;width:1275px;height:1px;background:#bab187;"></div>
<div style="left:79px;top:443px;width:307px;height:18px;background:#000;"></div>
<div style="left:846px;top:443px;width:102px;height:18px;background:#f08080;"></div>
<div class="t" style="right:1270px;top:447px;color:#000;font-size:12px;font-weight:normal;transform:scaleX(0.925);transform-origin:right center;">235</div>
<div class="t" style="left:48px;top:447px;color:#000;font-size:12px;font-weight:normal;transform:scaleX(0.925);transform-origin:left center;">644...</div>
<div class="t" style="right:837px;top:447px;color:#000;font-size:12px;font-weight:normal;transform:scaleX(0.925);transform-origin:right center;">96,61</div>
<div class="t" style="right:713px;top:447px;color:#000;font-size:12px;font-weight:normal;transform:scaleX(0.925);transform-origin:right center;">95,00</div>
<div class="t" style="right:628px;top:447px;color:#000;font-size:12px;font-weight:normal;transform:scaleX(0.925);transform-origin:right center;">190,00</div>
<div class="t" style="right:569px;top:447px;color:#000;font-size:12px;font-weight:normal;transform:scaleX(0.925);transform-origin:right center;">100,00</div>
<div class="t" style="right:466px;top:447px;color:#000;font-size:12px;font-weight:normal;transform:scaleX(0.925);transform-origin:right center;">200,00</div>
<div class="t" style="right:363px;top:447px;color:#000;font-size:12px;font-weight:normal;transform:scaleX(0.925);transform-origin:right center;">-10,00</div>
<div class="t" style="right:263px;top:447px;color:#000;font-size:12px;font-weight:normal;transform:scaleX(0.925);transform-origin:right center;">35,00</div>
<div class="t" style="right:179px;top:447px;color:#000;font-size:12px;font-weight:normal;transform:scaleX(0.925);transform-origin:right center;">95,00</div>
<div class="t" style="right:25px;top:447px;color:#000;font-size:12px;font-weight:normal;transform:scaleX(0.925);transform-origin:right center;">154,00</div>
<div style="left:91px;top:454px;width:3px;height:2px;background:#fff;"></div>
<div style="left:118px;top:449px;width:4px;height:7px;background:#fff;"></div>
<div style="left:126px;top:452px;width:2px;height:4px;background:#fff;"></div>
<div style="left:129px;top:452px;width:2px;height:4px;background:#fff;"></div>
<div style="left:139px;top:454px;width:3px;height:2px;background:#fff;"></div>
<div style="left:151px;top:454px;width:3px;height:2px;background:#fff;"></div>
<div style="left:186px;top:452px;width:3px;height:4px;background:#fff;"></div>
<div style="left:199px;top:452px;width:3px;height:4px;background:#fff;"></div>
<div style="left:217px;top:452px;width:3px;height:1px;background:#fff;"></div>
<div style="left:237px;top:452px;width:3px;height:1px;background:#fff;"></div>
<div style="left:248px;top:452px;width:3px;height:1px;background:#fff;"></div>
<div style="left:263px;top:449px;width:3px;height:7px;background:#fff;"></div>
<div style="left:11px;top:480px;width:1275px;height:1px;background:#bab187;"></div>
<div style="left:79px;top:462px;width:307px;height:18px;background:#000;"></div>
<div class="t" style="right:1270px;top:466px;color:#000;font-size:12px;font-weight:normal;transform:scaleX(0.925);transform-origin:right center;">236</div>
<div class="t" style="left:48px;top:466px;color:#000;font-size:12px;font-weight:normal;transform:scaleX(0.925);transform-origin:left center;">6612</div>
<div class="t" style="right:837px;top:466px;color:#000;font-size:12px;font-weight:normal;transform:scaleX(0.925);transform-origin:right center;">860,00</div>
<div class="t" style="right:713px;top:466px;color:#000;font-size:12px;font-weight:normal;transform:scaleX(0.925);transform-origin:right center;">860,00</div>
<div class="t" style="right:628px;top:466px;color:#000;font-size:12px;font-weight:normal;transform:scaleX(0.925);transform-origin:right center;">1 190,00</div>
<div class="t" style="right:569px;top:466px;color:#000;font-size:12px;font-weight:normal;transform:scaleX(0.925);transform-origin:right center;">27,00</div>
<div class="t" style="right:466px;top:466px;color:#000;font-size:12px;font-weight:normal;transform:scaleX(0.925);transform-origin:right center;">1 190,00</div>
<div class="t" style="right:263px;top:466px;color:#000;font-size:12px;font-weight:normal;transform:scaleX(0.925);transform-origin:right center;">59,00</div>
<div class="t" style="right:179px;top:466px;color:#000;font-size:12px;font-weight:normal;transform:scaleX(0.925);transform-origin:right center;">330,00</div>
<div class="t" style="right:25px;top:466px;color:#000;font-size:12px;font-weight:normal;transform:scaleX(0.925);transform-origin:right center;">157,00</div>
<div style="left:91px;top:471px;width:3px;height:4px;background:#fff;"></div>
<div style="left:108px;top:473px;width:3px;height:2px;background:#fff;"></div>
<div style="left:131px;top:473px;width:3px;height:2px;background:#fff;"></div>
<div style="left:139px;top:471px;width:3px;height:1px;background:#fff;"></div>
<div style="left:172px;top:473px;width:3px;height:2px;background:#fff;"></div>
<div style="left:184px;top:469px;width:1px;height:3px;background:#fff;"></div>
<div style="left:183px;top:472px;width:3px;height:3px;background:#fff;"></div>
<div style="left:190px;top:471px;width:3px;height:4px;background:#fff;"></div>
<div style="left:201px;top:473px;width:3px;height:2px;background:#fff;"></div>
<div style="left:218px;top:468px;width:4px;height:7px;background:#fff;"></div>
<div style="left:238px;top:468px;width:3px;height:7px;background:#fff;"></div>
<div style="left:11px;top:499px;width:1275px;height:1px;background:#bab187;"></div>
<div style="left:79px;top:481px;width:307px;height:18px;background:#000;"></div>
<div class="t" style="right:1270px;top:485px;color:#000;font-size:12px;font-weight:normal;transform:scaleX(0.925);transform-origin:right center;">237</div>
<div class="t" style="left:48px;top:485px;color:#000;font-size:12px;font-weight:normal;transform:scaleX(0.925);transform-origin:left center;">956</div>
<div class="t" style="right:837px;top:485px;color:#000;font-size:12px;font-weight:normal;transform:scaleX(0.925);transform-origin:right center;">798,92</div>
<div class="t" style="right:713px;top:485px;color:#000;font-size:12px;font-weight:normal;transform:scaleX(0.925);transform-origin:right center;">840,00</div>
<div class="t" style="right:628px;top:485px;color:#000;font-size:12px;font-weight:normal;transform:scaleX(0.925);transform-origin:right center;">1 070,00</div>
<div class="t" style="right:569px;top:485px;color:#000;font-size:12px;font-weight:normal;transform:scaleX(0.925);transform-origin:right center;">27,00</div>
<div class="t" style="right:466px;top:485px;color:#000;font-size:12px;font-weight:normal;transform:scaleX(0.925);transform-origin:right center;">1 070,00</div>
<div class="t" style="right:179px;top:485px;color:#000;font-size:12px;font-weight:normal;transform:scaleX(0.925);transform-origin:right center;">230,00</div>
<div class="t" style="right:25px;top:485px;color:#000;font-size:12px;font-weight:normal;transform:scaleX(0.925);transform-origin:right center;">158,00</div>
<div style="left:85px;top:487px;width:4px;height:7px;background:#fff;"></div>
<div style="left:93px;top:490px;width:2px;height:4px;background:#fff;"></div>
<div style="left:96px;top:490px;width:2px;height:4px;background:#fff;"></div>
<div style="left:106px;top:492px;width:3px;height:2px;background:#fff;"></div>
<div style="left:118px;top:492px;width:3px;height:2px;background:#fff;"></div>
<div style="left:153px;top:487px;width:4px;height:3px;background:#fff;"></div>
<div style="left:163px;top:490px;width:3px;height:4px;background:#fff;"></div>
<div style="left:11px;top:518px;width:1275px;height:1px;background:#bab187;"></div>
<div style="left:79px;top:500px;width:307px;height:18px;background:#000;"></div>
<div class="t" style="right:1270px;top:504px;color:#000;font-size:12px;font-weight:normal;transform:scaleX(0.925);transform-origin:right center;">238</div>
<div class="t" style="left:48px;top:504px;color:#000;font-size:12px;font-weight:normal;transform:scaleX(0.925);transform-origin:left center;">5552</div>
<div class="t" style="right:837px;top:504px;color:#000;font-size:12px;font-weight:normal;transform:scaleX(0.925);transform-origin:right center;">460,00</div>
<div class="t" style="right:713px;top:504px;color:#000;font-size:12px;font-weight:normal;transform:scaleX(0.925);transform-origin:right center;">460,00</div>
<div class="t" style="right:628px;top:504px;color:#000;font-size:12px;font-weight:normal;transform:scaleX(0.925);transform-origin:right center;">740,00</div>
<div class="t" style="right:569px;top:504px;color:#000;font-size:12px;font-weight:normal;transform:scaleX(0.925);transform-origin:right center;">60,00</div>
<div class="t" style="right:466px;top:504px;color:#000;font-size:12px;font-weight:normal;transform:scaleX(0.925);transform-origin:right center;">740,00</div>
<div class="t" style="right:263px;top:504px;color:#000;font-size:12px;font-weight:normal;transform:scaleX(0.925);transform-origin:right center;">21,00</div>
<div class="t" style="right:179px;top:504px;color:#000;font-size:12px;font-weight:normal;transform:scaleX(0.925);transform-origin:right center;">280,00</div>
<div class="t" style="right:25px;top:504px;color:#000;font-size:12px;font-weight:normal;transform:scaleX(0.925);transform-origin:right center;">164,00</div>
<div style="left:109px;top:511px;width:3px;height:2px;background:#fff;"></div>
<div style="left:121px;top:507px;width:1px;height:3px;background:#fff;"></div>
<div style="left:120px;top:510px;width:3px;height:3px;background:#fff;"></div>
<div style="left:127px;top:509px;width:3px;height:4px;background:#fff;"></div>
<div style="left:138px;top:511px;width:3px;height:2px;background:#fff;"></div>
<div style="left:154px;top:509px;width:3px;height:1px;background:#fff;"></div>
<div style="left:160px;top:511px;width:3px;height:2px;background:#fff;"></div>
<div style="left:171px;top:509px;width:3px;height:4px;background:#fff;"></div>
<div style="left:189px;top:509px;width:2px;height:4px;background:#fff;"></div>
<div style="left:11px;top:537px;width:1275px;height:1px;background:#bab187;"></div>
<div style="left:79px;top:519px;width:307px;height:18px;background:#000;"></div>
<div class="t" style="right:1270px;top:523px;color:#000;font-size:12px;font-weight:normal;transform:scaleX(0.925);transform-origin:right center;">239</div>
<div class="t" style="left:48px;top:523px;color:#000;font-size:12px;font-weight:normal;transform:scaleX(0.925);transform-origin:left center;">2047</div>
<div class="t" style="right:837px;top:523px;color:#000;font-size:12px;font-weight:normal;transform:scaleX(0.925);transform-origin:right center;">901,80</div>
<div class="t" style="right:713px;top:523px;color:#000;font-size:12px;font-weight:normal;transform:scaleX(0.925);transform-origin:right center;">908,30</div>
<div class="t" style="right:628px;top:523px;color:#000;font-size:12px;font-weight:normal;transform:scaleX(0.925);transform-origin:right center;">1 360,00</div>
<div class="t" style="right:569px;top:523px;color:#000;font-size:12px;font-weight:normal;transform:scaleX(0.925);transform-origin:right center;">27,00</div>
<div class="t" style="right:466px;top:523px;color:#000;font-size:12px;font-weight:normal;transform:scaleX(0.925);transform-origin:right center;">1 360,00</div>
<div class="t" style="right:263px;top:523px;color:#000;font-size:12px;font-weight:normal;transform:scaleX(0.925);transform-origin:right center;">9,00</div>
<div class="t" style="right:179px;top:523px;color:#000;font-size:12px;font-weight:normal;transform:scaleX(0.925);transform-origin:right center;">451,70</div>
<div class="t" style="right:25px;top:523px;color:#000;font-size:12px;font-weight:normal;transform:scaleX(0.925);transform-origin:right center;">164,00</div>
<div style="left:92px;top:528px;width:3px;height:4px;background:#fff;"></div>
<div style="left:109px;top:530px;width:3px;height:2px;background:#fff;"></div>
<div style="left:132px;top:530px;width:3px;height:2px;background:#fff;"></div>
<div style="left:140px;top:528px;width:3px;height:1px;background:#fff;"></div>
<div style="left:173px;top:530px;width:3px;height:2px;background:#fff;"></div>
<div style="left:193px;top:530px;width:3px;height:2px;background:#fff;"></div>
<div style="left:221px;top:528px;width:3px;height:4px;background:#fff;"></div>
<div style="left:227px;top:530px;width:3px;height:2px;background:#fff;"></div>
<div style="left:252px;top:525px;width:4px;height:7px;background:#fff;"></div>
<div style="left:11px;top:556px;width:1275px;height:1px;background:#bab187;"></div>
<div style="left:79px;top:538px;width:307px;height:18px;background:#000;"></div>
<div class="t" style="right:1270px;top:542px;color:#000;font-size:12px;font-weight:normal;transform:scaleX(0.925);transform-origin:right center;">240</div>
<div class="t" style="left:48px;top:542px;color:#000;font-size:12px;font-weight:normal;transform:scaleX(0.925);transform-origin:left center;">201...</div>
<div class="t" style="right:837px;top:542px;color:#000;font-size:12px;font-weight:normal;transform:scaleX(0.925);transform-origin:right center;">1,00</div>
<div class="t" style="right:713px;top:542px;color:#000;font-size:12px;font-weight:normal;transform:scaleX(0.925);transform-origin:right center;">1,00</div>
<div class="t" style="right:569px;top:542px;color:#000;font-size:12px;font-weight:normal;transform:scaleX(0.925);transform-origin:right center;">250,00</div>
<div class="t" style="right:263px;top:542px;color:#000;font-size:12px;font-weight:normal;transform:scaleX(0.925);transform-origin:right center;">113,00</div>
<div class="t" style="right:179px;top:542px;color:#000;font-size:12px;font-weight:normal;transform:scaleX(0.925);transform-origin:right center;">-1,00</div>
<div class="t" style="right:25px;top:542px;color:#000;font-size:12px;font-weight:normal;transform:scaleX(0.925);transform-origin:right center;">165,00</div>
<div style="left:86px;top:545px;width:1px;height:3px;background:#fff;"></div>
<div style="left:85px;top:548px;width:3px;height:3px;background:#fff;"></div>
<div style="left:100px;top:544px;width:4px;height:7px;background:#fff;"></div>
<div style="left:108px;top:547px;width:3px;height:4px;background:#fff;"></div>
<div style="left:127px;top:547px;width:3px;height:4px;background:#fff;"></div>
<div style="left:162px;top:547px;width:3px;height:4px;background:#fff;"></div>
<div style="left:171px;top:549px;width:3px;height:2px;background:#fff;"></div>
<div style="left:195px;top:547px;width:3px;height:4px;background:#fff;"></div>
<div style="left:201px;top:547px;width:3px;height:1px;background:#fff;"></div>
<div style="left:249px;top:549px;width:3px;height:2px;background:#fff;"></div>
<div style="left:11px;top:575px;width:1275px;height:1px;background:#bab187;"></div>
<div style="left:79px;top:557px;width:307px;height:18px;background:#000;"></div>
<div style="left:846px;top:557px;width:102px;height:18px;background:#f08080;"></div>
<div class="t" style="right:1270px;top:561px;color:#000;font-size:12px;font-weight:normal;transform:scaleX(0.925);transform-origin:right center;">241</div>
<div class="t" style="left:48px;top:561px;color:#000;font-size:12px;font-weight:normal;transform:scaleX(0.925);transform-origin:left center;">2094</div>
<div class="t" style="right:837px;top:561px;color:#000;font-size:12px;font-weight:normal;transform:scaleX(0.925);transform-origin:right center;">640,73</div>
<div class="t" style="right:713px;top:561px;color:#000;font-size:12px;font-weight:normal;transform:scaleX(0.925);transform-origin:right center;">630,00</div>
<div class="t" style="right:628px;top:561px;color:#000;font-size:12px;font-weight:normal;transform:scaleX(0.925);transform-origin:right center;">800,00</div>
<div class="t" style="right:569px;top:561px;color:#000;font-size:12px;font-weight:normal;transform:scaleX(0.925);transform-origin:right center;">27,00</div>
<div class="t" style="right:466px;top:561px;color:#000;font-size:12px;font-weight:normal;transform:scaleX(0.925);transform-origin:right center;">890,00</div>
<div class="t" style="right:363px;top:561px;color:#000;font-size:12px;font-weight:normal;transform:scaleX(0.925);transform-origin:right center;">-90,00</div>
<div class="t" style="right:263px;top:561px;color:#000;font-size:12px;font-weight:normal;transform:scaleX(0.925);transform-origin:right center;">8,00</div>
<div class="t" style="right:179px;top:561px;color:#000;font-size:12px;font-weight:normal;transform:scaleX(0.925);transform-origin:right center;">170,00</div>
<div class="t" style="right:25px;top:561px;color:#000;font-size:12px;font-weight:normal;transform:scaleX(0.925);transform-origin:right center;">169,00</div>
<div style="left:92px;top:566px;width:3px;height:4px;background:#fff;"></div>
<div style="left:109px;top:568px;width:3px;height:2px;background:#fff;"></div>
<div style="left:132px;top:568px;width:3px;height:2px;background:#fff;"></div>
<div style="left:140px;top:566px;width:3px;height:1px;background:#fff;"></div>
<div style="left:173px;top:568px;width:3px;height:2px;background:#fff;"></div>
<div style="left:194px;top:566px;width:3px;height:4px;background:#fff;"></div>
<div style="left:226px;top:566px;width:3px;height:1px;background:#fff;"></div>
<div style="left:256px;top:566px;width:3px;height:4px;background:#fff;"></div>
<div style="left:11px;top:594px;width:1275px;height:1px;background:#bab187;"></div>
<div style="left:79px;top:576px;width:307px;height:18px;background:#000;"></div>
<div class="t" style="right:1270px;top:580px;color:#000;font-size:12px;font-weight:normal;transform:scaleX(0.925);transform-origin:right center;">242</div>
<div class="t" style="left:48px;top:580px;color:#000;font-size:12px;font-weight:normal;transform:scaleX(0.925);transform-origin:left center;">5886</div>
<div class="t" style="right:837px;top:580px;color:#000;font-size:12px;font-weight:normal;transform:scaleX(0.925);transform-origin:right center;">1 218,17</div>
<div class="t" style="right:713px;top:580px;color:#000;font-size:12px;font-weight:normal;transform:scaleX(0.925);transform-origin:right center;">1 300,00</div>
<div class="t" style="right:628px;top:580px;color:#000;font-size:12px;font-weight:normal;transform:scaleX(0.925);transform-origin:right center;">1 660,00</div>
<div class="t" style="right:569px;top:580px;color:#000;font-size:12px;font-weight:normal;transform:scaleX(0.925);transform-origin:right center;">28,00</div>
<div class="t" style="right:466px;top:580px;color:#000;font-size:12px;font-weight:normal;transform:scaleX(0.925);transform-origin:right center;">1 660,00</div>
<div class="t" style="right:179px;top:580px;color:#000;font-size:12px;font-weight:normal;transform:scaleX(0.925);transform-origin:right center;">360,00</div>
<div class="t" style="right:25px;top:580px;color:#000;font-size:12px;font-weight:normal;transform:scaleX(0.925);transform-origin:right center;">172,00</div>
<div style="left:104px;top:587px;width:3px;height:2px;background:#fff;"></div>
<div style="left:121px;top:585px;width:2px;height:4px;background:#fff;"></div>
<div style="left:124px;top:585px;width:2px;height:4px;background:#fff;"></div>
<div style="left:129px;top:585px;width:3px;height:4px;background:#fff;"></div>
<div style="left:141px;top:587px;width:3px;height:2px;background:#fff;"></div>
<div style="left:153px;top:587px;width:3px;height:2px;background:#fff;"></div>
<div style="left:165px;top:587px;width:3px;height:2px;background:#fff;"></div>
<div style="left:173px;top:585px;width:3px;height:1px;background:#fff;"></div>
<div style="left:206px;top:587px;width:3px;height:2px;background:#fff;"></div>
<div style="left:226px;top:587px;width:3px;height:2px;background:#fff;"></div>
<div style="left:254px;top:585px;width:3px;height:4px;background:#fff;"></div>
<div style="left:260px;top:587px;width:3px;height:2px;background:#fff;"></div>
<div style="left:299px;top:585px;width:3px;height:4px;background:#fff;"></div>
<div style="left:311px;top:587px;width:3px;height:2px;background:#fff;"></div>
<div style="left:331px;top:582px;width:3px;height:7px;background:#fff;"></div>
<div style="left:11px;top:613px;width:1275px;height:1px;background:#bab187;"></div>
<div style="left:79px;top:595px;width:307px;height:18px;background:#000;"></div>
<div class="t" style="right:1270px;top:599px;color:#000;font-size:12px;font-weight:normal;transform:scaleX(0.925);transform-origin:right center;">243</div>
<div class="t" style="left:48px;top:599px;color:#000;font-size:12px;font-weight:normal;transform:scaleX(0.925);transform-origin:left center;">908</div>
<div class="t" style="right:837px;top:599px;color:#000;font-size:12px;font-weight:normal;transform:scaleX(0.925);transform-origin:right center;">198,41</div>
<div class="t" style="right:713px;top:599px;color:#000;font-size:12px;font-weight:normal;transform:scaleX(0.925);transform-origin:right center;">198,00</div>
<div class="t" style="right:628px;top:599px;color:#000;font-size:12px;font-weight:normal;transform:scaleX(0.925);transform-origin:right center;">400,00</div>
<div class="t" style="right:569px;top:599px;color:#000;font-size:12px;font-weight:normal;transform:scaleX(0.925);transform-origin:right center;">100,00</div>
<div class="t" style="right:466px;top:599px;color:#000;font-size:12px;font-weight:normal;transform:scaleX(0.925);transform-origin:right center;">400,00</div>
<div class="t" style="right:263px;top:599px;color:#000;font-size:12px;font-weight:normal;transform:scaleX(0.925);transform-origin:right center;">63,00</div>
<div class="t" style="right:179px;top:599px;color:#000;font-size:12px;font-weight:normal;transform:scaleX(0.925);transform-origin:right center;">202,00</div>
<div class="t" style="right:25px;top:599px;color:#000;font-size:12px;font-weight:normal;transform:scaleX(0.925);transform-origin:right center;">173,00</div>
<div style="left:86px;top:604px;width:2px;height:4px;background:#fff;"></div>
<div style="left:95px;top:604px;width:3px;height:4px;background:#fff;"></div>
<div style="left:101px;top:606px;width:3px;height:2px;background:#fff;"></div>
<div style="left:118px;top:604px;width:3px;height:1px;background:#fff;"></div>
<div style="left:118px;top:606px;width:3px;height:2px;background:#fff;"></div>
<div style="left:124px;top:604px;width:3px;height:4px;background:#fff;"></div>
<div style="left:130px;top:604px;width:3px;height:4px;background:#fff;"></div>
<div style="left:139px;top:601px;width:4px;height:3px;background:#fff;"></div>
<div style="left:182px;top:601px;width:4px;height:3px;background:#fff;"></div>
<div style="left:199px;top:604px;width:2px;height:4px;background:#fff;"></div>
<div style="left:211px;top:604px;width:3px;height:1px;background:#fff;"></div>
<div style="left:230px;top:604px;width:3px;height:1px;background:#fff;"></div>
<div style="left:230px;top:606px;width:3px;height:2px;background:#fff;"></div>
<div style="left:247px;top:604px;width:3px;height:1px;background:#fff;"></div>
<div style="left:247px;top:606px;width:3px;height:2px;background:#fff;"></div>
<div style="left:264px;top:604px;width:3px;height:1px;background:#fff;"></div>
<div style="left:276px;top:606px;width:3px;height:2px;background:#fff;"></div>
<div style="left:288px;top:606px;width:3px;height:2px;background:#fff;"></div>
<div style="left:315px;top:606px;width:3px;height:2px;background:#fff;"></div>
<div style="left:345px;top:601px;width:3px;height:7px;background:#fff;"></div>
<div style="left:11px;top:632px;width:1275px;height:1px;background:#bab187;"></div>
<div style="left:79px;top:614px;width:307px;height:18px;background:#000;"></div>
<div style="left:846px;top:614px;width:102px;height:18px;background:#f08080;"></div>
<div class="t" style="right:1270px;top:618px;color:#000;font-size:12px;font-weight:normal;transform:scaleX(0.925);transform-origin:right center;">244</div>
<div class="t" style="left:48px;top:618px;color:#000;font-size:12px;font-weight:normal;transform:scaleX(0.925);transform-origin:left center;">401</div>
<div class="t" style="right:837px;top:618px;color:#000;font-size:12px;font-weight:normal;transform:scaleX(0.925);transform-origin:right center;">934,39</div>
<div class="t" style="right:713px;top:618px;color:#000;font-size:12px;font-weight:normal;transform:scaleX(0.925);transform-origin:right center;">950,00</div>
<div class="t" style="right:628px;top:618px;color:#000;font-size:12px;font-weight:normal;transform:scaleX(0.925);transform-origin:right center;">1 210,00</div>
<div class="t" style="right:569px;top:618px;color:#000;font-size:12px;font-weight:normal;transform:scaleX(0.925);transform-origin:right center;">27,00</div>
<div class="t" style="right:466px;top:618px;color:#000;font-size:12px;font-weight:normal;transform:scaleX(0.925);transform-origin:right center;">1 220,00</div>
<div class="t" style="right:363px;top:618px;color:#000;font-size:12px;font-weight:normal;transform:scaleX(0.925);transform-origin:right center;">-10,00</div>
<div class="t" style="right:263px;top:618px;color:#000;font-size:12px;font-weight:normal;transform:scaleX(0.925);transform-origin:right center;">14,00</div>
<div class="t" style="right:179px;top:618px;color:#000;font-size:12px;font-weight:normal;transform:scaleX(0.925);transform-origin:right center;">260,00</div>
<div class="t" style="right:25px;top:618px;color:#000;font-size:12px;font-weight:normal;transform:scaleX(0.925);transform-origin:right center;">175,00</div>
<div style="left:94px;top:623px;width:3px;height:1px;background:#fff;"></div>
<div style="left:100px;top:625px;width:3px;height:2px;background:#fff;"></div>
<div style="left:121px;top:620px;width:4px;height:7px;background:#fff;"></div>
<div style="left:130px;top:621px;width:1px;height:3px;background:#fff;"></div>
<div style="left:129px;top:624px;width:3px;height:3px;background:#fff;"></div>
<div style="left:155px;top:620px;width:3px;height:7px;background:#fff;"></div>
<div style="left:846px;top:633px;width:102px;height:3px;background:#90ee90;"></div>
<div style="left:42px;top:251px;width:1px;height:385px;background:#bab187;"></div>
<div style="left:78px;top:251px;width:1px;height:385px;background:#bab187;"></div>
<div style="left:386px;top:251px;width:1px;height:385px;background:#bab187;"></div>
<div style="left:474px;top:251px;width:1px;height:385px;background:#bab187;"></div>
<div style="left:598px;top:251px;width:1px;height:385px;background:#bab187;"></div>
<div style="left:683px;top:251px;width:1px;height:385px;background:#bab187;"></div>
<div style="left:742px;top:251px;width:1px;height:385px;background:#bab187;"></div>
<div style="left:845px;top:251px;width:1px;height:385px;background:#bab187;"></div>
<div style="left:948px;top:251px;width:1px;height:385px;background:#bab187;"></div>
<div style="left:1048px;top:251px;width:1px;height:385px;background:#bab187;"></div>
<div style="left:1132px;top:251px;width:1px;height:385px;background:#bab187;"></div>
<div style="left:1286px;top:251px;width:1px;height:385px;background:#bab187;"></div>
</body></html>
